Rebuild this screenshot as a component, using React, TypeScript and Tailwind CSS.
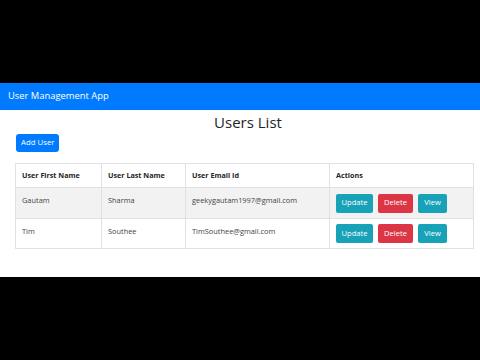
import React from 'react'

interface User {
  first: string
  last: string
  email: string
}

const users: User[] = [
  { first: 'Gautam', last: 'Sharma', email: 'geekygautam1997@gmail.com' },
  { first: 'Tim', last: 'Southee', email: 'TimSouthee@gmail.com' },
]

const font = { fontFamily: '"Open Sans", "Noto Sans", sans-serif' }

export default function App() {
  return (
    <div className="w-[480px] h-[360px] bg-black flex flex-col justify-center" style={font}>
      <div className="h-[194px] bg-white flex flex-col">
        {/* Navbar */}
        <div className="h-[27px] bg-[#007bff] flex items-center px-[8px] text-white text-[9.4px]">
          User Management App
        </div>

        <div className="pl-[15px] pr-[7px]">
          <h2 className="text-center text-[15px] leading-[22px] mt-[1px] pl-[8px] text-[#212529]">Users List</h2>

          <button className="block mt-[1px] ml-[1px] h-[18px] px-[5px] rounded-[3px] bg-[#007bff] text-white text-[7.8px]">
            Add User
          </button>

          <table className="mt-[11px] w-[458px] border-collapse table-fixed text-[7.4px] text-[#212529]">
            <colgroup>
              <col className="w-[86px]" />
              <col className="w-[84px]" />
              <col className="w-[144px]" />
              <col className="w-[144px]" />
            </colgroup>
            <thead>
              <tr className="h-[24px]">
                <th className="border border-[#dee2e6] text-left font-bold px-[6px] text-[7.2px]">User First Name</th>
                <th className="border border-[#dee2e6] text-left font-bold px-[6px] text-[7.2px]">User Last Name</th>
                <th className="border border-[#dee2e6] text-left font-bold px-[6px] text-[7.2px]">User Email Id</th>
                <th className="border border-[#dee2e6] text-left font-bold px-[6px] text-[7.2px]">Actions</th>
              </tr>
            </thead>
            <tbody>
              {users.map((u, idx) => (
                <tr key={idx} className={idx === 0 ? 'h-[31px] bg-[#f2f2f2]' : 'h-[30px]'}>
                  <td className="border border-[#dee2e6] px-[6px] text-[#444] align-top pt-[7px]">{u.first}</td>
                  <td className="border border-[#dee2e6] px-[6px] text-[#444] align-top pt-[7px]">{u.last}</td>
                  <td className="border border-[#dee2e6] px-[6px] text-[#444] align-top pt-[7px]">{u.email}</td>
                  <td className="border border-[#dee2e6] px-[6px]">
                    <div className="flex gap-[5px]">
                      <button className="h-[19px] w-[37px] rounded-[2px] bg-[#17a2b8] text-white text-[7.6px]">Update</button>
                      <button className="h-[19px] w-[35px] rounded-[2px] bg-[#dc3545] text-white text-[7.6px]">Delete</button>
                      <button className="h-[19px] w-[29px] rounded-[2px] bg-[#17a2b8] text-white text-[7.6px]">View</button>
                    </div>
                  </td>
                </tr>
              ))}
            </tbody>
          </table>
        </div>
      </div>
    </div>
  )
}
